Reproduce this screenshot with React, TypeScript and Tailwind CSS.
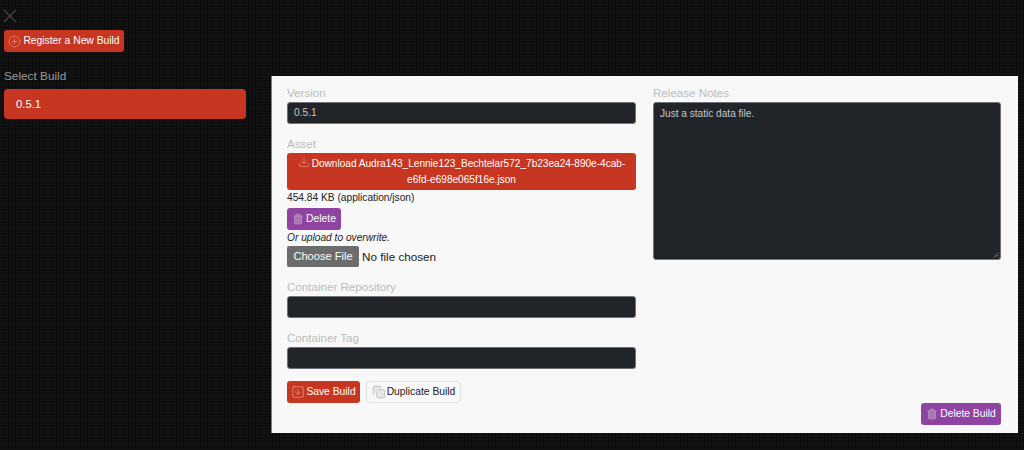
import { CirclePlus, Copy, Download, SquareArrowDown, Trash2 } from 'lucide-react';

const font = { fontFamily: '"Liberation Sans", Arial, sans-serif' };

function Label({ children }: { children: string }) {
  return <div className="h-[18px] text-[11.6px] leading-[18px] text-[#bcbcbc]">{children}</div>;
}

function DarkInput({ value = '' }: { value?: string }) {
  return (
    <div className="h-[22px] rounded-[3px] border border-[#6f7276] bg-[#212529] px-[6px] text-[10.2px] leading-[20px] text-[#c4c6c8]">
      {value}
    </div>
  );
}

export default function App() {
  return (
    <div
      style={font}
      className="flex h-[450px] w-[1024px] overflow-hidden bg-[#0e0e0e] bg-[radial-gradient(#1b1b1b_1px,transparent_1px)] bg-[size:3px_3px]"
    >
      <aside className="ml-1 w-[242px] shrink-0">
        <svg viewBox="0 0 14 14" className="ml-[-1px] mt-[9px] h-[14px] w-[14px] text-[#444444]" fill="none" stroke="currentColor" strokeWidth="1.2">
          <path d="M1 1 13 13M13 1 1 13" />
        </svg>
        <button className="mt-[7px] flex h-[22px] w-[120px] items-center justify-center gap-[2px] rounded-[3px] bg-[#c63621] text-[10.3px] text-white">
          <CirclePlus className="h-[13px] w-[13px] text-[#f0b5aa]" strokeWidth={1} />
          Register a New Build
        </button>
        <div className="mt-4 h-[16px] text-[11.8px] leading-[16px] text-[#9a9a9a]">Select Build</div>
        <div className="mt-[5px] h-[30px] rounded-[4px] bg-[#c63621] pl-3 text-[11.3px] leading-[30px] text-white">0.5.1</div>
      </aside>

      <main className="ml-[25px] mt-[76px] flex h-[357px] w-[747px] shrink-0 flex-col border-l border-[#808080] bg-[#f8f8f8] pb-2 pl-[15px] pr-[17px] pt-[8px] text-[10.2px] text-[#222]">
        <div className="flex gap-[17px]">
          <section className="w-[349px] shrink-0">
            <Label>Version</Label>
            <DarkInput value="0.5.1" />
            <div className="mt-[11px]">
              <Label>Asset</Label>
            </div>
            <button className="block h-[37px] w-full rounded-[3px] bg-[#c63621] text-center text-[10.1px] leading-[15.5px] text-white">
              <Download className="mr-[2px] inline h-[12px] w-[12px] align-[-1px] text-[#f0b5aa]" strokeWidth={1} />
              Download Audra143_Lennie123_Bechtelar572_7b23ea24-890e-4cab-
              <br />
              e6fd-e698e065f16e.json
            </button>
            <div className="h-[16px] leading-[16px]">454.84 KB (application/json)</div>
            <button className="mt-[2px] flex h-[22px] w-[54px] items-center justify-center gap-[2px] rounded-[3px] bg-[#8e44a0] text-[10.3px] text-white">
              <Trash2 className="h-3 w-3 fill-[#a877b5] text-[#cba8d3]" strokeWidth={1} />
              Delete
            </button>
            <div className="h-[16px] italic leading-[16px]">Or upload to overwrite.</div>
            <div className="flex h-[21px] items-center gap-[3px] text-[11.7px]">
              <button className="h-[21px] w-[72px] rounded-[2px] bg-[#6c6c6c] text-[11.1px] text-white">Choose File</button>
              <span className="text-[#222]">No file chosen</span>
            </div>
            <div className="mt-[11px]">
              <Label>Container Repository</Label>
            </div>
            <DarkInput />
            <div className="mt-[11px]">
              <Label>Container Tag</Label>
            </div>
            <DarkInput />
            <div className="mt-3 flex gap-[6px]">
              <button className="flex h-[22px] w-[73px] items-center justify-center gap-[1px] rounded-[3px] bg-[#c63621] text-[10.3px] text-white">
                <SquareArrowDown className="h-[14px] w-[14px] text-[#f0b5aa]" strokeWidth={1} />
                Save Build
              </button>
              <button className="flex h-[22px] w-[95px] items-center justify-center gap-[1px] rounded-[3px] border border-[#e2e2e2] bg-[#f8f8f8] text-[10.3px] text-[#222]">
                <Copy className="h-[14px] w-[14px] fill-[#e4e4e4] text-[#a8a8a8]" strokeWidth={1} />
                Duplicate Build
              </button>
            </div>
          </section>

          <section className="w-[348px] shrink-0">
            <Label>Release Notes</Label>
            <div className="relative h-[158px] rounded-[3px] border border-[#6f7276] bg-[#212529] px-[6px] py-[3px] text-[10.1px] leading-[15px] text-[#c4c6c8]">
              Just a static data file.
              <svg viewBox="0 0 6 6" className="absolute bottom-[1px] right-[1px] h-[6px] w-[6px] text-[#8a8d90]" fill="none" stroke="currentColor" strokeWidth="0.7">
                <path d="M0.5 5.5 5.5 0.5M3 5.5 5.5 3" />
              </svg>
            </div>
          </section>
        </div>
        <button className="flex h-[22px] w-[80px] items-center justify-center gap-[2px] self-end rounded-[3px] bg-[#8e44a0] text-[10.3px] text-white">
          <Trash2 className="h-3 w-3 fill-[#a877b5] text-[#cba8d3]" strokeWidth={1} />
          Delete Build
        </button>
      </main>
    </div>
  );
}
